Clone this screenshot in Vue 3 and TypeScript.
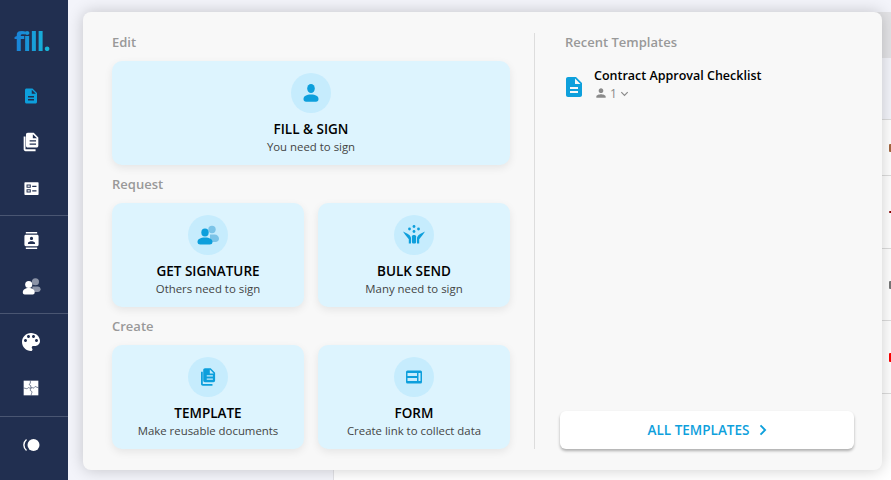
<template>
  <div class="app">
    <nav class="sidebar">
      <div class="logo"><span>fill</span><i>.</i></div>
      <div class="nav-group first">
        <div v-for="item in navTop" :key="item.name" class="nav-item" :class="{ active: item.active }">
          <svg viewBox="0 0 24 24" :width="item.size" :height="item.size"><path :d="item.d" fill-rule="evenodd" /></svg>
        </div>
      </div>
      <div class="nav-group second">
        <div class="nav-item">
          <svg viewBox="0 0 24 24" width="17" height="17"><path :d="icons.contacts" /></svg>
        </div>
        <div class="nav-item">
          <svg viewBox="0 0 24 24" width="19" height="19">
            <circle cx="17" cy="6" r="4.500" fill="#8b93a7" />
            <path d="M13 12h7c2 0 3.500 1.600 3.500 3.600 0 2-1.500 3.400-3.500 3.400h-7z" fill="#8b93a7" />
            <circle cx="8.500" cy="9.500" r="4.500" />
            <path d="M1 19.500c0-3.500 3-5.600 7.500-5.600s7.500 2.100 7.500 5.600c0 1.400-1 2.500-2.400 2.500H3.400C2 22 1 20.900 1 19.500z" />
          </svg>
        </div>
      </div>
      <div class="nav-group third">
        <div class="nav-item">
          <svg viewBox="0 0 24 24" width="24" height="24"><path :d="icons.palette" /></svg>
        </div>
        <div class="nav-item">
          <svg viewBox="0 0 24 24" width="16" height="16">
            <rect x="1" y="1" width="22" height="22" />
            <path d="M11 1v4c-2.500.5-1.500 3.500.5 3.500L12 12c-1.500 1.500-2.500-1-4-.5s-1 2-3 1.500-2-1-4-1M12 12c1.500-2 2.500.5 4 0s1-2.500 3-2 2 1.500 4 1.500M12 12c.5 1.500-1.500 2-1 3.500s2.500 1 2.500 2.500-1.500 3-1 5" fill="none" stroke="#212f50" stroke-width="0.900" />
          </svg>
        </div>
      </div>
      <div class="nav-group fourth">
        <div class="nav-item">
          <svg viewBox="0 0 20 20" width="20" height="20">
            <circle cx="12.500" cy="10" r="6" />
            <path d="M5.500 4.500C2 7.500 2 12.500 5.500 15.500" fill="none" stroke="#fff" stroke-width="1.400" />
          </svg>
        </div>
      </div>
    </nav>

    <main class="backdrop">
      <div class="back-top"></div>
      <div class="back-body">
        <aside class="back-side"></aside>
        <section class="back-content">
          <div class="back-band"></div>
          <div class="back-head"></div>
          <div v-for="row in backRows" :key="row.h" class="back-row" :style="{ height: row.h + 'px' }">
            <span v-if="row.mark" class="mark" :style="{ height: row.mark + 'px', background: row.color }"></span>
          </div>
        </section>
      </div>
    </main>

    <section class="panel">
      <div class="left">
        <template v-for="group in groups" :key="group.label">
          <h4 class="label">{{ group.label }}</h4>
          <div class="cards">
            <div v-for="card in group.cards" :key="card.title" class="card">
              <div class="circle">
                <svg viewBox="0 0 24 24" width="24" height="24" v-html="card.icon"></svg>
              </div>
              <div class="card-title">{{ card.title }}</div>
              <div class="card-sub">{{ card.sub }}</div>
            </div>
          </div>
        </template>
      </div>
      <div class="right">
        <h4 class="label recent">Recent Templates</h4>
        <div class="tpl">
          <svg class="tpl-icon" viewBox="4 2 16 20" width="16" height="20"><path :d="icons.doc" fill="#0ea0dc" /></svg>
          <div>
            <div class="tpl-name">Contract Approval Checklist</div>
            <div class="tpl-meta">
              <svg viewBox="0 0 24 24" width="14" height="14"><path :d="icons.person" fill="#8a8a8a" /></svg>
              <span>1</span>
              <svg viewBox="0 0 24 24" width="11" height="11"><path d="M5 9l7 7 7-7" fill="none" stroke="#8a8a8a" stroke-width="2.600" /></svg>
            </div>
          </div>
        </div>
        <button class="all-btn">
          ALL TEMPLATES
          <svg viewBox="0 0 12 14" width="10" height="12"><path d="M3 1.500l5.500 5.500-5.500 5.500" fill="none" stroke="#0ea0dc" stroke-width="2.200" /></svg>
        </button>
      </div>
    </section>
  </div>
</template>

<script setup lang="ts">
const icons = {
  doc: 'M14 2H6c-1.100 0-1.990.9-1.990 2L4 20c0 1.100.89 2 1.990 2H18c1.100 0 2-.9 2-2V8l-6-6zm2 16H8v-2h8v2zm0-4H8v-2h8v2zm-3-5V3.500L18.500 9H13z',
  person: 'M12 12c2.210 0 4-1.790 4-4s-1.790-4-4-4-4 1.790-4 4 1.790 4 4 4zm0 2c-2.670 0-8 1.340-8 4v2h16v-2c0-2.660-5.330-4-8-4z',
  contacts: 'M20 0H4v2h16V0zM4 24h16v-2H4v2zM20 4H4c-1.100 0-2 .9-2 2v12c0 1.100.9 2 2 2h16c1.100 0 2-.9 2-2V6c0-1.100-.9-2-2-2zm-8 2.750c1.240 0 2.250 1.010 2.250 2.250s-1.010 2.250-2.250 2.250S9.750 10.240 9.750 9 10.760 6.750 12 6.750zM17 17H7v-1.500c0-1.670 3.330-2.500 5-2.500s5 .83 5 2.500V17z',
  palette: 'M12 3c-4.970 0-9 4.030-9 9s4.030 9 9 9c.83 0 1.500-.67 1.500-1.500 0-.39-.15-.74-.39-1.030-.23-.28-.38-.63-.38-1.020 0-.83.67-1.500 1.500-1.500H16c2.760 0 5-2.240 5-5 0-4.420-4.030-8-9-8zm-5.500 9c-.83 0-1.500-.67-1.500-1.500S5.670 9 6.500 9 8 9.670 8 10.500 7.330 12 6.500 12zm3-4C8.670 8 8 7.330 8 6.500S8.670 5 9.500 5s1.500.67 1.500 1.500S10.330 8 9.500 8zm5 0c-.83 0-1.500-.67-1.500-1.500S13.670 5 14.500 5s1.500.67 1.500 1.500S15.330 8 14.500 8zm3 4c-.83 0-1.500-.67-1.500-1.500S16.670 9 17.500 9s1.500.67 1.500 1.500-.67 1.500-1.500 1.500z',
  stack: 'M15 2H8.500C7.400 2 6.500 2.900 6.500 4v12c0 1.100.9 2 2 2H18c1.100 0 2-.9 2-2V7l-5-5zm2.500 13h-7v-1.500h7V15zm0-3.500h-7V10h7v1.500zM14 8V3.500L18.500 8H14zM4 6v14c0 1.100.9 2 2 2h11v-2H6V6H4z',
  checklist: 'M21 3H3c-.6 0-1 .4-1 1v16c0 .6.4 1 1 1h18c.6 0 1-.4 1-1V4c0-.6-.4-1-1-1zM5 6.500h6v4.500H5V6.500zm1.400 1.300v1.900h3.200V7.800H6.400zM5 13h6v4.500H5V13zm1.400 1.300v1.900h3.200v-1.900H6.400zM13 8h6v1.800h-6V8zm0 6.500h6v1.800h-6v-1.800z',
}

const navTop = [
  { name: 'docs', d: icons.doc, size: 18, active: true },
  { name: 'templates', d: icons.stack, size: 22, active: false },
  { name: 'forms', d: icons.checklist, size: 17, active: false },
]

const backRows = [
  { h: 56, mark: 8, color: '#a5673f' },
  { h: 73, mark: 2, color: '#8b0000' },
  { h: 72, mark: 8, color: '#777' },
  { h: 73, mark: 9, color: '#f00' },
  { h: 87, mark: 0, color: '' },
]

const blue = '#0d9fdc'
const light = '#7cc4e8'

const groups = [
  {
    label: 'Edit',
    cards: [
      {
        title: 'FILL & SIGN',
        sub: 'You need to sign',
        icon: `<ellipse cx="12" cy="7.500" rx="3.800" ry="4.500" fill="${blue}"/><path d="M4.500 18c0-3 3-4.500 7.500-4.500s7.500 1.500 7.500 4.500c0 1.800-1 2.800-2.500 2.800H7c-1.500 0-2.500-1-2.500-2.800z" fill="${blue}"/>`,
      },
    ],
  },
  {
    label: 'Request',
    cards: [
      {
        title: 'GET SIGNATURE',
        sub: 'Others need to sign',
        icon: `<circle cx="16" cy="6.500" r="3.700" fill="${light}"/><path d="M14 11.500h4.500c2.500 0 4.500 1.700 4.500 4 0 2-1.500 3.500-3.500 3.500H14z" fill="${light}"/><ellipse cx="9" cy="9.500" rx="3.700" ry="4" fill="${blue}"/><path d="M1.500 19c0-3 3-4.500 7.500-4.500s7.500 1.500 7.500 4.500c0 1.700-1.200 2.500-2.700 2.500H4.200c-1.500 0-2.700-.8-2.700-2.500z" fill="${blue}"/>`,
      },
      {
        title: 'BULK SEND',
        sub: 'Many need to sign',
        icon: `<circle cx="12" cy="3.500" r="1.400" fill="${blue}"/><circle cx="7.500" cy="6" r="1.400" fill="${blue}"/><circle cx="16.500" cy="6" r="1.400" fill="${blue}"/><circle cx="12" cy="8.500" r="1.400" fill="${blue}"/><path d="M1 8.500l4.500 2.300c1.500.8 3 2 3.500 4v5.700H6.800v-4.200L3 11.500zM23 8.500l-4.500 2.300c-1.500.8-3 2-3.500 4v5.700h2.200v-4.200l3.800-4.800z" fill="${blue}"/><rect x="9.900" y="12" width="4.200" height="8.500" rx="1.500" fill="${blue}"/>`,
      },
    ],
  },
  {
    label: 'Create',
    cards: [
      {
        title: 'TEMPLATE',
        sub: 'Make reusable documents',
        icon: `<g transform="translate(1.500 1.500) scale(.88)"><path d="${icons.stack}" fill="${blue}"/></g>`,
      },
      {
        title: 'FORM',
        sub: 'Create link to collect data',
        icon: `<rect x="4" y="5.500" width="16" height="13" rx="1.500" fill="${blue}"/><rect x="5.500" y="8" width="9.500" height="3" fill="#c8edfd"/><rect x="5.500" y="13" width="9.500" height="3" fill="#c8edfd"/><rect x="16.500" y="8" width="2" height="8" fill="#c8edfd"/>`,
      },
    ],
  },
]
</script>

<style>
html,
body {
  margin: 0;
  overflow: hidden;
}
</style>

<style scoped>
.app {
  position: relative;
  display: flex;
  width: 891px;
  height: 480px;
  overflow: hidden;
  font-family: "Open Sans", "Noto Sans", sans-serif;
}

.sidebar {
  width: 68px;
  flex-shrink: 0;
  background: #212f50;
}

.logo {
  height: 73px;
  box-sizing: border-box;
  padding: 21px 0 0 14px;
  font-family: "Open Sans", sans-serif;
  font-size: 27px;
  font-weight: 700;
  line-height: 40px;
  letter-spacing: -1.500px;
  background: linear-gradient(90deg, #1a7fd8 14px, #17b6d8 48px);
  background-clip: text;
  -webkit-background-clip: text;
  color: transparent;
}

.logo i {
  font-style: normal;
}

.nav-group {
  border-bottom: 1px solid #4a5672;
}

.nav-group.first {
  padding-bottom: 4px;
}

.nav-group.second {
  padding: 1px 0 4px;
}

.nav-group.third {
  padding: 5px 0;
}

.nav-group.fourth {
  padding-top: 5px;
  border-bottom: none;
}

.nav-item {
  display: flex;
  align-items: center;
  justify-content: center;
  height: 46px;
  padding-right: 6px;
}

.nav-item svg {
  fill: #fff;
}

.nav-item.active svg {
  fill: #0d9fdc;
}

.backdrop {
  display: flex;
  flex: 1;
  flex-direction: column;
  background: #f3f4fa;
}

.back-top {
  height: 12px;
  flex-shrink: 0;
}

.back-body {
  display: flex;
  flex: 1;
}

.back-side {
  width: 265px;
  flex-shrink: 0;
  border-right: 1px solid #e2e2e6;
}

.back-content {
  flex: 1;
}

.back-band {
  height: 46px;
  background: #e3e3e6;
}

.back-head {
  height: 61px;
  border-bottom: 1px solid #ddd;
}

.back-row {
  display: flex;
  align-items: center;
  justify-content: flex-end;
  box-sizing: border-box;
  background: #fff;
  border-bottom: 1px solid #ddd;
}

.mark {
  width: 2px;
  border-radius: 1px 0 0 1px;
}

.panel {
  position: absolute;
  top: 12px;
  left: 83px;
  display: flex;
  width: 799px;
  height: 458px;
  box-sizing: border-box;
  padding: 21px 28px 21px 29px;
  background: #f8f8f8;
  border-radius: 8px;
  box-shadow: 0 0 16px rgba(0, 0, 0, 0.2);
}

.left {
  width: 398px;
  padding-right: 24px;
  border-right: 1px solid #ddd;
}

.label {
  margin: 10px 0;
  font-size: 13px;
  font-weight: 600;
  line-height: 18px;
  color: #999;
}

.left > .label:first-child {
  margin-top: 0;
}

.cards {
  display: flex;
  gap: 14px;
}

.card {
  flex: 1;
  height: 104px;
  box-sizing: border-box;
  padding-top: 12px;
  background: #ddf4fe;
  border-radius: 10px;
  box-shadow: 0 3px 8px rgba(0, 0, 0, 0.08);
  text-align: center;
}

.circle {
  display: flex;
  align-items: center;
  justify-content: center;
  width: 40px;
  height: 40px;
  margin: 0 auto 6px;
  background: #c6ecfd;
  border-radius: 50%;
}

.card-title {
  font-size: 13.500px;
  font-weight: 600;
  line-height: 20px;
  color: #000;
}

.card-sub {
  font-size: 11.400px;
  line-height: 15px;
  color: #444;
}

.right {
  display: flex;
  flex: 1;
  flex-direction: column;
  padding-left: 25px;
}

.recent {
  margin: 0 0 10px 5px;
}

.tpl {
  display: flex;
  align-items: flex-start;
  gap: 12px;
  margin: 6px 0 0 6px;
}

.tpl-icon {
  margin-top: 10px;
}

.tpl-name {
  font-size: 12.500px;
  font-weight: 600;
  line-height: 17px;
  color: #000;
}

.tpl-meta {
  display: flex;
  align-items: center;
  gap: 2px;
  height: 16px;
  margin-top: 1px;
  font-size: 12px;
  color: #8a8a8a;
}

.all-btn {
  display: flex;
  align-items: center;
  justify-content: center;
  gap: 9px;
  height: 38px;
  margin-top: auto;
  padding-left: 8px;
  background: #fff;
  border: none;
  border-radius: 6px;
  box-shadow: 0 2px 3px rgba(0, 0, 0, 0.3);
  font-family: inherit;
  font-size: 13.500px;
  font-weight: 600;
  color: #0ea0dc;
}
</style>
